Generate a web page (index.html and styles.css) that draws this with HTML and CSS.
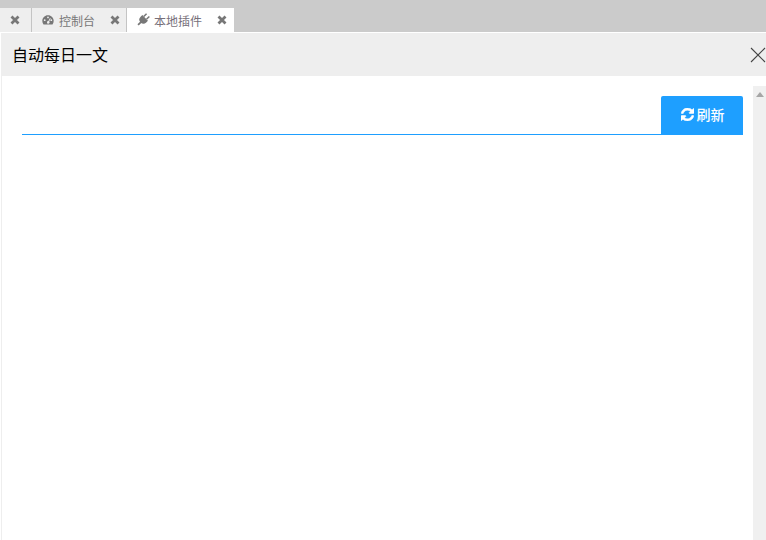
FILE: index.html
```html
<!DOCTYPE html>
<html lang="zh">
<head>
<meta charset="utf-8">
<title>自动每日一文</title>
<link rel="stylesheet" href="styles.css">
</head>
<body>
<div class="tabs">
  <div class="tab tab-first">
    <svg class="x" viewBox="0 0 10 10"><path d="M1.500 1.500l7 7M8.500 1.500l-7 7"/></svg>
  </div>
  <div class="tab tab-console">
    <svg class="ico" viewBox="0 0 12 12"><path fill-rule="evenodd" d="M6 1.200C2.800 1.200.3 3.700.3 6.800c0 1.400.4 2.700 1.200 3.800h9c.8-1.100 1.200-2.400 1.200-3.800C11.700 3.700 9.200 1.200 6 1.200zM6 2.500a.9.900 0 1 1 0 1.800.9.900 0 0 1 0-1.800zM2.700 5.300a.9.900 0 1 1 0 1.800.9.900 0 0 1 0-1.800zM9.300 5.300a.9.900 0 1 1 0 1.800.9.900 0 0 1 0-1.800zM8 3.900l.7.400-1.500 3.200a1.300 1.300 0 1 1-.8-.4z"/></svg>
    <span class="label">控制台</span>
    <svg class="x" viewBox="0 0 10 10"><path d="M1.500 1.500l7 7M8.500 1.500l-7 7"/></svg>
  </div>
  <div class="tab tab-active">
    <svg class="ico ico-plug" viewBox="0 0 12 12"><g transform="rotate(45 6 6)"><rect x="3.300" y="-1" width="1.500" height="4"/><rect x="7.200" y="-1" width="1.500" height="4"/><path d="M2 3h8v2.400a4 4 0 0 1-8 0z"/><rect x="5.100" y="8.500" width="1.800" height="4.500"/></g></svg>
    <span class="label">本地插件</span>
    <svg class="x" viewBox="0 0 10 10"><path d="M1.500 1.500l7 7M8.500 1.500l-7 7"/></svg>
  </div>
</div>
<div class="dialog">
  <header class="head">
    <h1 class="title">自动每日一文</h1>
    <svg class="close" viewBox="0 0 16 16"><path d="M1 1l14 14M15 1L1 15"/></svg>
  </header>
  <div class="body">
    <div class="main">
      <div class="bar">
        <div class="field"></div>
        <button class="btn" type="button">
          <svg class="refresh" viewBox="0 0 1536 1536"><path d="M1511 928q0 5-1 7-64 268-268 434.500t-478 166.500q-146 0-282.500-55t-243.500-157l-129 129q-19 19-45 19t-45-19-19-45v-448q0-26 19-45t45-19h448q26 0 45 19t19 45-19 45l-137 137q71 66 161 102t187 36q134 0 250-65t186-179q11-17 53-117 8-23 30-23h192q13 0 22.500 9.500t9.500 22.500zm25-800v448q0 26-19 45t-45 19h-448q-26 0-45-19t-19-45 19-45l138-138q-148-137-349-137-134 0-250 65t-186 179q-11 17-53 117-8 23-30 23h-199q-13 0-22.500-9.500t-9.500-22.500v-7q65-268 270-434.500t480-166.500q146 0 284 55.500t245 156.500l130-129q19-19 45-19t45 19 19 45z"/></svg>刷新
        </button>
      </div>
    </div>
    <div class="scroll"><span class="arrow"></span></div>
  </div>
</div>
</body>
</html>
```
FILE: styles.css
```css
html, body {
  margin: 0;
  padding: 0;
  height: 100%;
  overflow: hidden;
}
body {
  background: #cbcbcb;
  font-family: "Noto Sans CJK SC", "Liberation Sans", sans-serif;
  display: flex;
  flex-direction: column;
}
.tabs {
  display: flex;
  height: 32px;
  padding-top: 8px;
  box-sizing: border-box;
  flex: none;
}
.tab {
  display: flex;
  align-items: center;
  box-sizing: border-box;
  background: #eeeeee;
  color: #777;
  font-size: 12px;
  border-right: 1px solid #c4c4c4;
}
.tab-first { width: 32px; padding-left: 10px; }
.tab-console { width: 95px; padding-left: 10px; }
.tab-active { width: 107px; padding-left: 10px; background: #fff; border-right: 0; }
.ico { width: 12px; height: 12px; fill: #777; flex: none; }
.ico-plug { overflow: visible; }
.label { margin-left: 5px; white-space: nowrap; }
.tab-console .label { width: 51px; }
.tab-active .label { width: 63px; color: #77707a; }
.x { width: 10px; height: 10px; fill: none; stroke: #777; stroke-width: 2.800px; flex: none; }
.dialog {
  flex: 1;
  display: flex;
  flex-direction: column;
  background: #fff;
  border-top: 1px solid #fff;
  border-left: 1px solid #fff;
  min-height: 0;
}
.head {
  height: 43px;
  flex: none;
  display: flex;
  align-items: center;
  justify-content: space-between;
  background: #eeeeee;
  padding-left: 11px;
}
.title {
  margin: 0 0 2px;
  font-size: 16px;
  font-weight: 400;
  color: #000;
}
.close { width: 16px; height: 16px; fill: none; stroke: #444; stroke-width: 1.100px; flex: none; }
.body {
  flex: 1;
  display: flex;
  padding-top: 10px;
  min-height: 0;
  border-left: 1px solid #eeeeee;
}
.main {
  flex: 1;
  padding: 10px 10px 0 20px;
}
.bar {
  display: flex;
  height: 39px;
  box-sizing: border-box;
  border-bottom: 1px solid #1e9fff;
}
.field { flex: 1; }
.btn {
  width: 82px;
  height: 38px;
  box-sizing: border-box;
  border: 0;
  border-radius: 2px 2px 0 0;
  background: #1e9fff;
  color: #fff;
  font-family: inherit;
  font-size: 14px;
  font-weight: 500;
  line-height: 1;
  display: flex;
  align-items: center;
  justify-content: center;
  gap: 3px;
  padding: 0 0 2px 1px;
}
.refresh { width: 13px; height: 13px; fill: #fff; stroke: #fff; stroke-width: 70px; flex: none; }
.scroll {
  width: 13px;
  flex: none;
  background: #f0f0f0;
  display: flex;
  justify-content: center;
  padding-top: 6px;
  box-sizing: border-box;
}
.arrow {
  width: 0;
  height: 0;
  border-left: 4px solid transparent;
  border-right: 4px solid transparent;
  border-bottom: 5px solid #a6a6a6;
}
```
